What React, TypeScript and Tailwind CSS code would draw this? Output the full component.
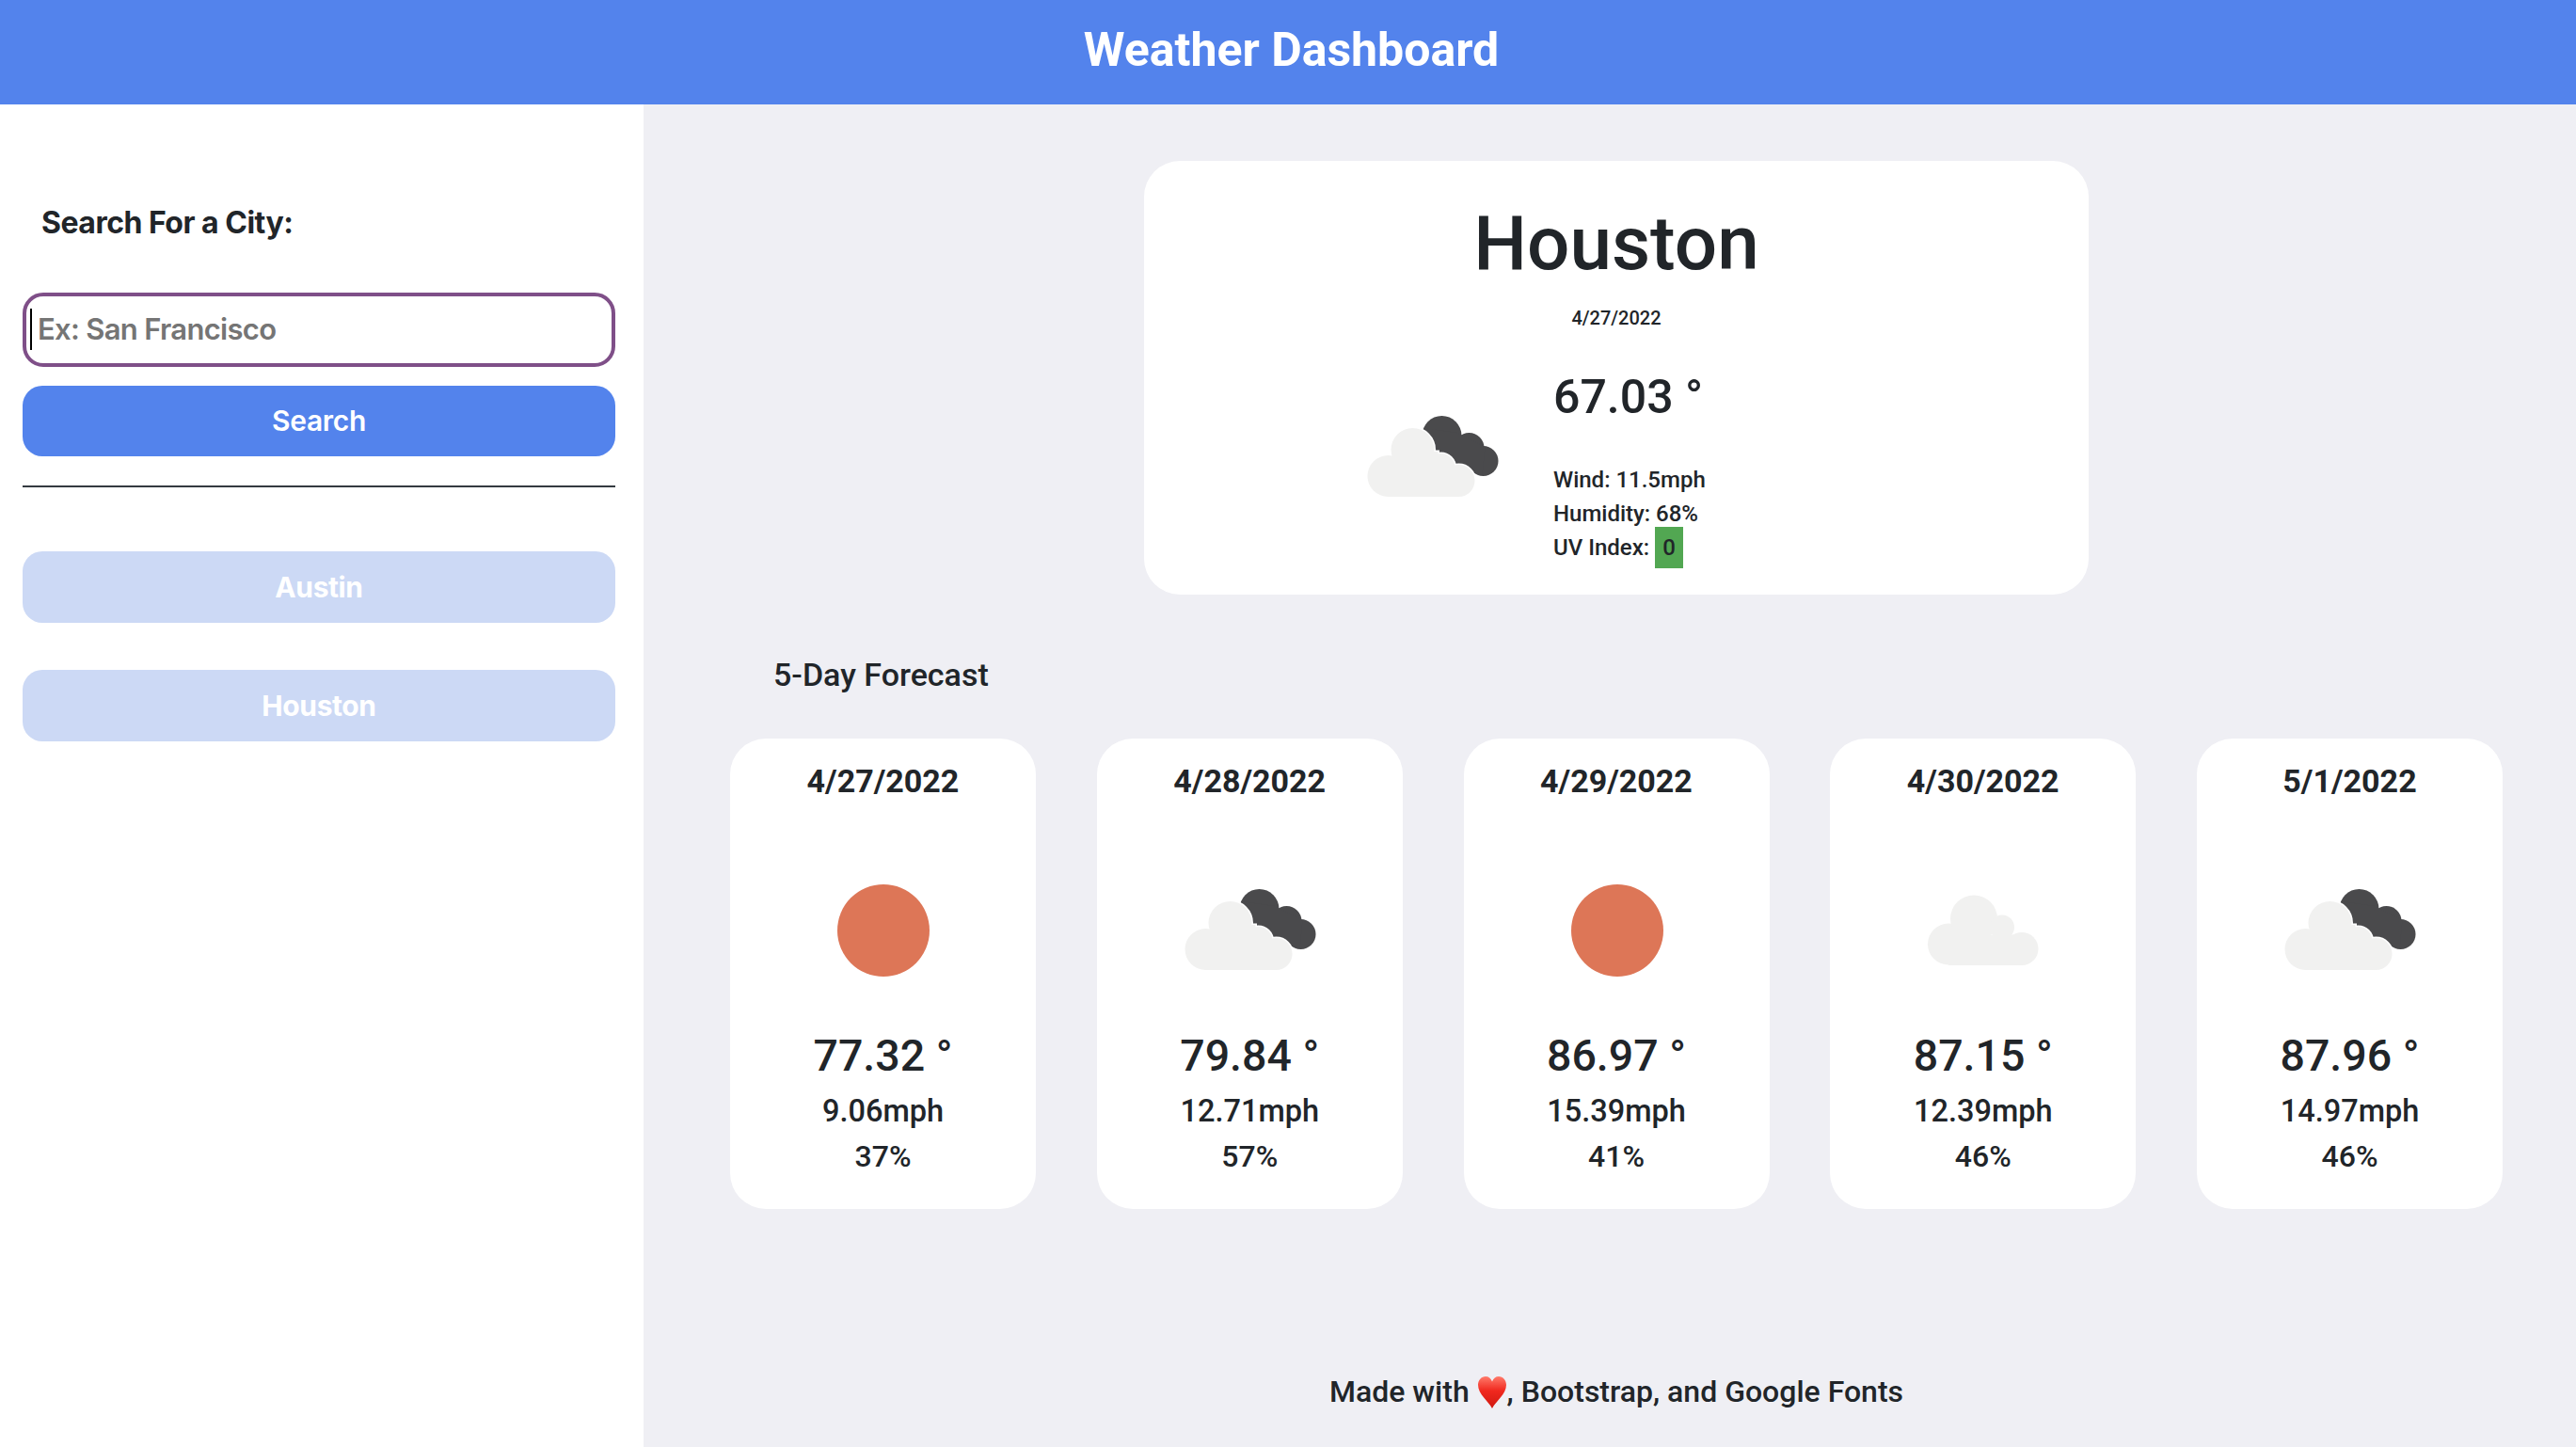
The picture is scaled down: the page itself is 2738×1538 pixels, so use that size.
const roboto = { fontFamily: 'Roboto, sans-serif' };

function LightCloud({ fill, stroke }: { fill: string; stroke?: string }) {
  const s = stroke ? { stroke, strokeWidth: 3 } : {};
  return (
    <g fill={fill} {...s}>
      <circle cx="22" cy="51" r="22" />
      <circle cx="48" cy="23" r="23" />
      <circle cx="78" cy="42" r="15" />
      <circle cx="97" cy="56" r="17" />
      <rect x="22" y="40" width="75" height="33" />
      <rect x="30" y="25" width="45" height="25" />
    </g>
  );
}

function PartlyCloudy() {
  return (
    <svg viewBox="0 0 175 175" className="w-[175px] h-[175px] shrink-0">
      <g transform="translate(18.5 56)">
        <g fill="#4a4a4c">
          <circle cx="79" cy="8" r="21" />
          <circle cx="108" cy="21" r="16" />
          <circle cx="123" cy="35" r="16" />
          <polygon points="60,0 95,5 125,20 122,50 90,42 68,20" />
        </g>
        <LightCloud fill="#ffffff" stroke="#ffffff" />
        <LightCloud fill="#f1f1f0" />
      </g>
    </svg>
  );
}

function Cloudy() {
  return (
    <svg viewBox="0 0 175 175" className="w-[175px] h-[175px] shrink-0">
      <g transform="translate(29 49.5)" fill="#f1f1f0">
        <circle cx="22" cy="52" r="22" />
        <circle cx="49" cy="25" r="25" />
        <circle cx="79" cy="34" r="13" />
        <circle cx="100" cy="57" r="17.5" />
        <rect x="22" y="42" width="78" height="32.5" />
      </g>
    </svg>
  );
}

function Sun() {
  return (
    <svg viewBox="0 0 175 175" className="w-[175px] h-[175px] shrink-0">
      <circle cx="88" cy="87" r="49" fill="#dd7657" />
    </svg>
  );
}

function Heart() {
  return (
    <svg viewBox="0 0 32 36" className="inline-block w-[32px] h-[36px] align-[-8px]">
      <defs>
        <linearGradient id="h" x1="0" y1="0" x2="0" y2="1">
          <stop offset="0" stopColor="#ff7a6a" />
          <stop offset="0.45" stopColor="#f0281e" />
          <stop offset="1" stopColor="#d01810" />
        </linearGradient>
      </defs>
      <path d="M16 35C12 27 1 20 1 10 1 5 4.5 1 9 1 12.2 1 14.8 3 16 6.5 17.2 3 19.8 1 23 1 27.5 1 31 5 31 10 31 20 20 27 16 35Z" fill="url(#h)" />
    </svg>
  );
}

const days = [
  { d: '4/27/2022', i: 's', t: '77.32 °', w: '9.06mph', h: '37%' },
  { d: '4/28/2022', i: 'p', t: '79.84 °', w: '12.71mph', h: '57%' },
  { d: '4/29/2022', i: 's', t: '86.97 °', w: '15.39mph', h: '41%' },
  { d: '4/30/2022', i: 'c', t: '87.15 °', w: '12.39mph', h: '46%' },
  { d: '5/1/2022', i: 'p', t: '87.96 °', w: '14.97mph', h: '46%' },
];

export default function App() {
  return (
    <div className="w-[2738px] h-[1538px] flex flex-col overflow-hidden bg-white text-[#212529]" style={roboto}>
      <header className="h-[111px] shrink-0 bg-[#5383ec] flex items-center justify-center pb-[6px] pl-[7px]">
        <h1 className="text-[50px] font-bold text-white leading-none">Weather Dashboard</h1>
      </header>
      <div className="flex flex-1 min-h-0">
        <aside className="w-[684px] shrink-0 bg-white pl-[24px] pr-[30px] font-['Inter',sans-serif]">
          <div className="mt-[107px] ml-[20px] text-[32px] leading-[38px] font-bold tracking-[-0.5px]">Search For a City:</div>
          <div className="relative mt-[55px]">
            <input
              readOnly
              placeholder="Ex: San Francisco"
              className="w-full h-[79px] rounded-[22px] border-[4px] border-[#7f4f88] bg-white pl-[12px] pb-[2px] text-[31px] font-semibold tracking-[-0.7px] placeholder:text-[#757575] outline-none"
            />
            <span className="absolute left-[8px] top-[17px] w-[2px] h-[44px] bg-black"></span>
          </div>
          <button className="mt-[20px] block w-full h-[75px] rounded-[21px] bg-[#5383ec] text-white text-[30px] font-semibold tracking-[-0.3px]">Search</button>
          <hr className="mt-[31px] border-0 border-t-2 border-[#343a40]" />
          <button className="mt-[68px] block w-full h-[76px] rounded-[21px] bg-[#ccd9f5] text-white text-[30px] font-bold tracking-[-0.4px]">Austin</button>
          <button className="mt-[50px] block w-full h-[76px] rounded-[21px] bg-[#ccd9f5] text-white text-[30px] font-bold tracking-[-0.4px]">Houston</button>
        </aside>
        <main className="flex-1 min-w-0 bg-[#efeff4] pl-[14px] flex flex-col items-center">
          <section className="mt-[60px] w-[1004px] h-[461px] shrink-0 bg-white rounded-[38px] flex flex-col">
            <h2 className="mt-[43px] text-center text-[80px] leading-[90px] font-medium">Houston</h2>
            <div className="mt-[22px] text-center text-[20px] leading-[24px] font-medium">4/27/2022</div>
            <div className="flex items-start pl-[219px]">
              <div className="mt-[49px]"><PartlyCloudy /></div>
              <div className="ml-[41px] mt-[42px]">
                <div className="text-[50px] leading-[60px] font-medium">67.03 °</div>
                <div className="mt-[40px] text-[24px] leading-[36px] font-medium">Wind: 11.5mph</div>
                <div className="text-[24px] leading-[36px] font-medium">Humidity: 68%</div>
                <div className="text-[24px] h-[36px] flex items-center font-medium">
                  UV Index:
                  <span className="ml-[6px] w-[30px] h-[44px] shrink-0 bg-[#52a752] flex items-center justify-center">0</span>
                </div>
              </div>
            </div>
          </section>
          <div className="w-[1884px] mt-[64px] pl-[46px] text-[34px] leading-[42px] font-medium">5-Day Forecast</div>
          <div className="w-[1884px] mt-[47px] flex justify-between">
            {days.map((x) => (
              <div key={x.d} className="w-[325px] h-[500px] bg-white rounded-[38px] flex flex-col items-center">
                <div className="mt-[30px] text-[34px] leading-[30px] font-bold">{x.d}</div>
                <div className="mt-[57px]">
                  {x.i === 's' ? <Sun /> : x.i === 'p' ? <PartlyCloudy /> : <Cloudy />}
                </div>
                <div className="mt-[15px] text-[46.5px] leading-[60px] font-medium">{x.t}</div>
                <div className="mt-[9px] text-[32.5px] leading-[40px] font-medium">{x.w}</div>
                <div className="mt-[8px] text-[32px] leading-[40px] font-medium">{x.h}</div>
              </div>
            ))}
          </div>
          <div className="mt-[174px] h-[40px] text-[32px] leading-[40px] font-medium">
            Made with <Heart />, Bootstrap, and Google Fonts
          </div>
        </main>
      </div>
    </div>
  );
}
